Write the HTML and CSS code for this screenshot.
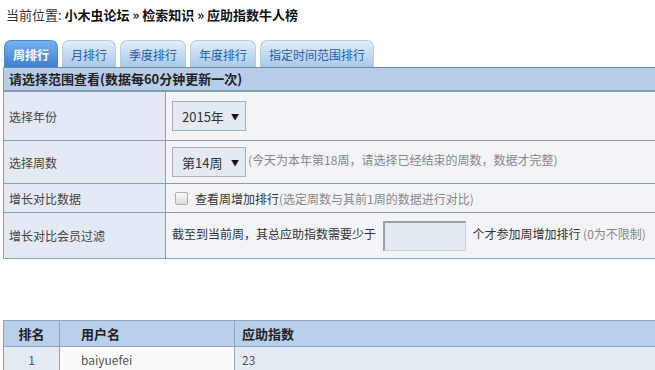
FILE: index.html
```html
<!DOCTYPE html>
<html>
<head>
    <meta charset="utf-8">
    <title>应助指数牛人榜</title>
    <link rel="stylesheet" href="styles.css">
</head>
<body>
    <div class="crumb">当前位置: <b>小木虫论坛 » 检索知识 » 应助指数牛人榜</b></div>

    <ul class="tabs">
        <li class="tab active">周排行</li>
        <li class="tab">月排行</li>
        <li class="tab">季度排行</li>
        <li class="tab">年度排行</li>
        <li class="tab">指定时间范围排行</li>
    </ul>

    <div class="panel">
        <div class="panel-title">请选择范围查看(数据每60分钟更新一次)</div>
        <table class="form-table">
            <tr class="row-year">
                <td class="label">选择年份</td>
                <td class="value"><span class="select">2015年<span class="arrow">▼</span></span></td>
            </tr>
            <tr class="row-week">
                <td class="label">选择周数</td>
                <td class="value"><span class="select">第14周<span class="arrow">▼</span></span><span class="note">(今天为本年第18周，请选择已经结束的周数，数据才完整)</span></td>
            </tr>
            <tr class="row-check">
                <td class="label">增长对比数据</td>
                <td class="value"><span class="checkbox"></span>查看周增加排行<span class="note">(选定周数与其前1周的数据进行对比)</span></td>
            </tr>
            <tr class="row-filter">
                <td class="label">增长对比会员过滤</td>
                <td class="value">截至到当前周，其总应助指数需要少于 <span class="input"></span> 个才参加周增加排行 <span class="note">(0为不限制)</span></td>
            </tr>
        </table>
    </div>

    <table class="rank">
        <tr>
            <th class="c-rank">排名</th>
            <th class="c-name">用户名</th>
            <th class="c-score">应助指数</th>
        </tr>
        <tr>
            <td class="c-rank">1</td>
            <td class="c-name">baiyuefei</td>
            <td class="c-score">23</td>
        </tr>
    </table>
</body>
</html>
```

FILE: styles.css
```css
body {
    margin: 0;
    font-family: "Noto Sans CJK SC", "Liberation Sans", sans-serif;
    font-size: 12px;
    color: #333;
    background: #fff;
    overflow: hidden;
}

.crumb {
    padding: 6px 0 0 6px;
    height: 28px;
    font-size: 13px;
    line-height: 18px;
    color: #333;
}

.crumb b {
    color: #111;
}

.tabs {
    list-style: none;
    margin: 6px 0 0 4px;
    padding: 0;
    display: flex;
    gap: 4px;
    height: 27px;
}

.tab {
    padding: 0 8px;
    line-height: 27px;
    font-size: 12px;
    color: #2a5caa;
    border-radius: 7px 7px 0 0;
    background: linear-gradient(#e2eefa, #a9c8e8);
    border: 1px solid #b4cce4;
    border-bottom: none;
}

.tab.active {
    color: #fff;
    font-weight: bold;
    background: linear-gradient(#78b2ee, #3d80d2);
    border-color: #4e8ad4;
}

.panel {
    margin-left: 3px;
    margin-right: -40px;
    border-left: 1px solid #8a9fb6;
}

.panel-title {
    height: 22px;
    line-height: 22px;
    padding-left: 5px;
    font-size: 13px;
    font-weight: bold;
    color: #222;
    background: #b8cdea;
    border-top: 1px solid #6f88a4;
    border-bottom: 2px solid #7f9db0;
}

.form-table {
    width: 100%;
    border-collapse: collapse;
}

.form-table td {
    border-bottom: 1px solid #8a9fb6;
    padding: 0 0 0 5px;
}

.form-table .label {
    width: 156px;
    background: #e4eaf3;
    color: #444;
    border-right: 1px solid #8a9fb6;
}

.form-table .value {
    background: #f3f4f8;
    padding-left: 6px;
}

.row-year td {
    height: 48px;
}

.row-week td {
    height: 42px;
}

.row-check td {
    height: 28px;
}

.row-filter td {
    height: 45px;
}

.select {
    display: inline-flex;
    align-items: center;
    justify-content: space-between;
    box-sizing: border-box;
    width: 74px;
    height: 30px;
    padding: 0 6px 0 9px;
    vertical-align: middle;
    font-size: 13px;
    color: #333;
    background: #e4eaf2;
    border: 1px solid #a9b0b8;
}

.arrow {
    font-size: 8px;
    color: #111;
}

.note {
    color: #888;
}

.row-week .note {
    margin-left: 2px;
}

.checkbox {
    display: inline-block;
    width: 11px;
    height: 11px;
    margin: 0 7px 0 3px;
    vertical-align: -1px;
    border: 1px solid #b0b0b0;
    border-radius: 2px;
    background: linear-gradient(#fafafa, #dcdcdc);
}

.input {
    display: inline-block;
    box-sizing: border-box;
    width: 83px;
    height: 30px;
    margin: 0 4px;
    vertical-align: middle;
    background: #e4eaf2;
    border: 1px solid #c9d0d8;
    border-top: 2px solid #9aa0a6;
    border-left: 2px solid #9aa0a6;
}

.rank {
    margin: 61px 0 0 3px;
    width: 700px;
    border-collapse: collapse;
}

.rank th,
.rank td {
    border: 1px solid #8aa6c6;
    text-align: left;
    padding: 0 0 0 7px;
}

.rank th {
    height: 25px;
    font-size: 13px;
    color: #222;
    background: #b9cfec;
}

.rank td {
    height: 24px;
    color: #555;
    background: #e5ebf3;
}

.rank .c-rank {
    width: 55px;
    text-align: center;
    padding: 0;
}

.rank .c-name {
    width: 153px;
    padding-left: 21px;
}

.rank td.c-name {
    background: #fbfbfb;
}
```
